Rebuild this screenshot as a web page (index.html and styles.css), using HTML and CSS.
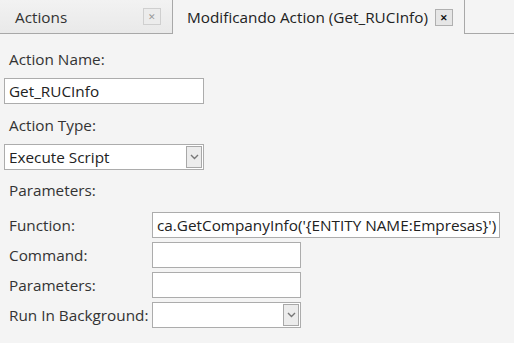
FILE: index.html
```html
<!DOCTYPE html>
<html lang="es">
<head>
  <meta charset="UTF-8">
  <title>Modificando Action</title>
  <link rel="stylesheet" href="styles.css">
</head>
<body>
  <div class="tabs">
    <div class="tab">
      <span class="tab-title">Actions</span>
      <span class="close">&#x2715;</span>
    </div>
    <div class="tab active">
      <span class="tab-title">Modificando Action (Get_RUCInfo)</span>
      <span class="close">&#x2715;</span>
    </div>
    <div class="tab-rest"></div>
  </div>

  <div class="form">
    <div class="label first">Action Name:</div>
    <div class="field wide">Get_RUCInfo</div>

    <div class="label">Action Type:</div>
    <div class="field wide select">
      <span class="value">Execute Script</span>
      <span class="arrow"><svg width="9" height="6" viewBox="0 0 9 6"><path d="M1 1 L4.5 4.5 L8 1" fill="none" stroke="#777" stroke-width="1.4"/></svg></span>
    </div>

    <div class="label section">Parameters:</div>

    <div class="params">
      <div class="plabel">Function:</div>
      <div class="field long">ca.GetCompanyInfo('{ENTITY NAME:Empresas}')</div>

      <div class="plabel">Command:</div>
      <div class="field short"></div>

      <div class="plabel">Parameters:</div>
      <div class="field short"></div>

      <div class="plabel">Run In Background:</div>
      <div class="field short select">
        <span class="value"></span>
        <span class="arrow"><svg width="9" height="6" viewBox="0 0 9 6"><path d="M1 1 L4.5 4.5 L8 1" fill="none" stroke="#777" stroke-width="1.4"/></svg></span>
      </div>
    </div>
  </div>
</body>
</html>
```

FILE: styles.css
```css
body {
  margin: 0;
  background-color: #f4f4f4;
  font-family: 'Open Sans', 'Noto Sans', sans-serif;
  font-size: 15.3px;
  color: #333;
}
.tabs {
  display: flex;
  height: 34px;
}
.tab {
  display: flex;
  align-items: center;
  box-sizing: border-box;
  height: 34px;
}
.tab:first-child {
  width: 173px;
  padding-left: 15px;
  background: linear-gradient(#f2f2f2, #e9e9e9);
  border-right: 1px solid #a8a8a8;
  border-bottom: 1px solid #a8a8a8;
}
.tab-title {
  flex: 1;
}
.tab.active {
  width: 291px;
  padding-left: 14px;
  color: #222;
}
.tab-rest {
  flex: 1;
  border-left: 1px solid #a8a8a8;
  border-bottom: 1px solid #a8a8a8;
  box-sizing: border-box;
}
.close {
  box-sizing: border-box;
  width: 18px;
  height: 17px;
  margin-right: 11px;
  display: flex;
  align-items: center;
  justify-content: center;
  font-size: 9px;
  color: #999;
  border: 1px solid #cfcfcf;
  background-color: #ececec;
}
.tab.active .close {
  color: #111;
  font-weight: bold;
  border-color: #b0b0b0;
  background-color: #e6e6e6;
}
.form {
  padding-left: 4px;
}
.label {
  padding-left: 5px;
  line-height: 20px;
  margin-top: 11px;
  margin-bottom: 9px;
}
.label.first {
  margin-top: 15px;
}
.label.section {
  margin-top: 10px;
  margin-bottom: 12px;
}
.field {
  box-sizing: border-box;
  height: 26px;
  line-height: 24px;
  padding-left: 4px;
  background-color: #fff;
  border: 1px solid #acacac;
  color: #222;
  white-space: nowrap;
  overflow: hidden;
}
.wide {
  width: 200px;
}
.select {
  display: flex;
  align-items: center;
  padding-right: 1px;
}
.select .value {
  flex: 1;
}
.arrow {
  box-sizing: border-box;
  width: 16px;
  height: 22px;
  display: flex;
  align-items: center;
  justify-content: center;
  border: 1px solid #a8a8a8;
  background-color: #ececec;
}
.params {
  display: grid;
  grid-template-columns: 148px auto;
  row-gap: 4px;
  align-items: center;
  justify-items: start;
}
.plabel {
  padding-left: 5px;
}
.long {
  width: 348px;
  padding-left: 4px;
}
.short {
  width: 149px;
}
```
